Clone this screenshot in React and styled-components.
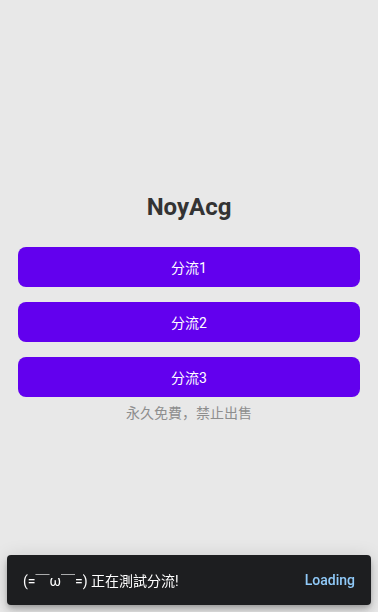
import React from "react";
import styled, { createGlobalStyle } from "styled-components";

const Global = createGlobalStyle`
  html, body { margin: 0; padding: 0; background: #e8e8e8; }
  body { font-family: Roboto, "Noto Sans CJK SC", sans-serif; }
`;

const Page = styled.main`
  min-height: 100vh;
  box-sizing: border-box;
  display: flex;
  flex-direction: column;
  justify-content: center;
  padding: 2px 18px 0;
`;

const Title = styled.h1`
  margin: 0 0 24px;
  height: 32px;
  line-height: 32px;
  text-align: center;
  font-size: 24px;
  font-weight: 700;
  color: #333333;
`;

const List = styled.div`
  display: flex;
  flex-direction: column;
  gap: 15px;
`;

const Button = styled.button`
  height: 40px;
  border: none;
  border-radius: 8px;
  background: #6200ee;
  color: #ffffff;
  font-family: Roboto, "Noto Sans CJK SC", sans-serif;
  font-size: 14px;
  font-weight: 400;
  cursor: pointer;
`;

const Note = styled.p`
  margin: 6px 0 0;
  line-height: 20px;
  text-align: center;
  font-size: 14px;
  font-weight: 400;
  color: #8e8e8e;
`;

const Snackbar = styled.div`
  position: fixed;
  left: 7px;
  right: 7px;
  bottom: 7px;
  height: 50px;
  box-sizing: border-box;
  padding: 0 16px;
  display: flex;
  align-items: center;
  justify-content: space-between;
  background: #1d1e20;
  border-radius: 4px;
  box-shadow: 0 3px 5px -1px rgba(0,0,0,0.2), 0 6px 10px 0 rgba(0,0,0,0.14), 0 1px 18px 0 rgba(0,0,0,0.12);
  font-size: 14px;
`;

const Message = styled.span`
  color: #ffffff;
`;

const Action = styled.span`
  color: #90caf9;
  font-weight: 500;
`;

export default function App() {
  return (
    <>
      <Global />
      <Page>
        <Title>NoyAcg</Title>
        <List>
          {["分流1", "分流2", "分流3"].map((t) => (
            <Button key={t}>{t}</Button>
          ))}
        </List>
        <Note>永久免費，禁止出售</Note>
      </Page>
      <Snackbar>
        <Message>(=￣ω￣=) 正在測試分流!</Message>
        <Action>Loading</Action>
      </Snackbar>
    </>
  );
}
